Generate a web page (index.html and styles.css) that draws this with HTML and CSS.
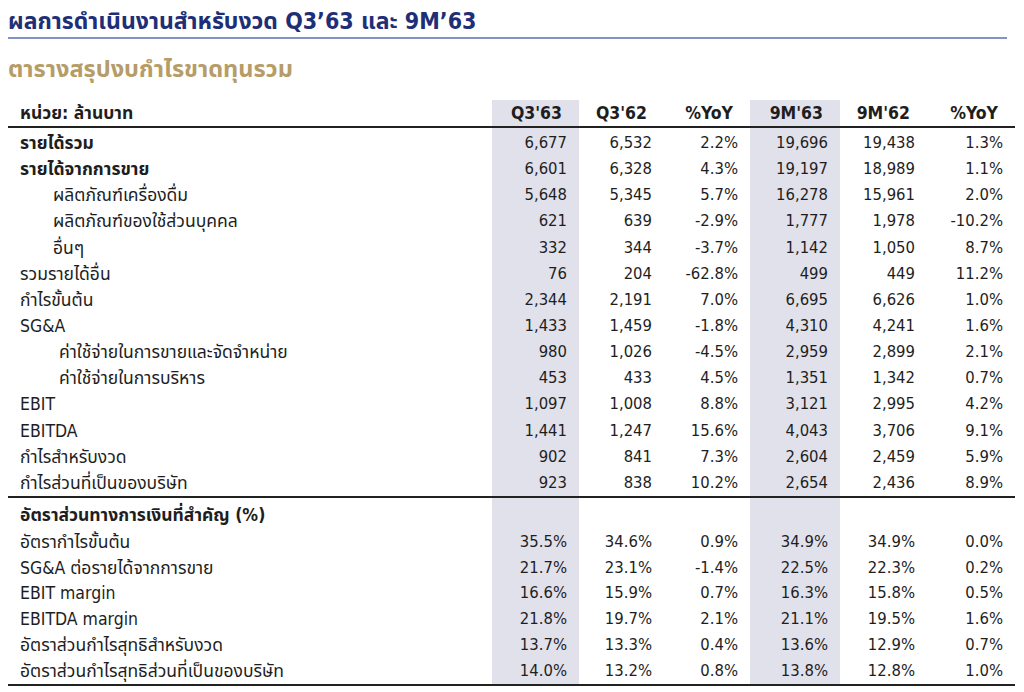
FILE: index.html
```html
<!DOCTYPE html>
<html lang="th">
<head>
<meta charset="utf-8">
<title>ผลการดำเนินงาน</title>
<link rel="stylesheet" href="styles.css">
</head>
<body>
<div class="page">
  <h1 class="title">ผลการดำเนินงานสำหรับงวด Q3’63 และ 9M’63</h1>
  <h2 class="subtitle">ตารางสรุปงบกำไรขาดทุนรวม</h2>
  <table class="fin">
    <colgroup>
      <col class="c-label"><col class="c-q363"><col class="c-q362"><col class="c-yoy1"><col class="c-9m63"><col class="c-9m62"><col class="c-yoy2">
    </colgroup>
    <thead>
      <tr class="head">
        <th class="label">หน่วย: ล้านบาท</th><th class="hl">Q3'63</th><th>Q3'62</th><th>%YoY</th><th class="hl">9M'63</th><th>9M'62</th><th>%YoY</th>
      </tr>
    </thead>
    <tbody class="sec1">
      <tr class="first"><td class="label b">รายได้รวม</td><td class="hl">6,677</td><td>6,532</td><td>2.2%</td><td class="hl">19,696</td><td>19,438</td><td>1.3%</td></tr>
      <tr><td class="label b">รายได้จากการขาย</td><td class="hl">6,601</td><td>6,328</td><td>4.3%</td><td class="hl">19,197</td><td>18,989</td><td>1.1%</td></tr>
      <tr><td class="label i1">ผลิตภัณฑ์เครื่องดื่ม</td><td class="hl">5,648</td><td>5,345</td><td>5.7%</td><td class="hl">16,278</td><td>15,961</td><td>2.0%</td></tr>
      <tr><td class="label i1">ผลิตภัณฑ์ของใช้ส่วนบุคคล</td><td class="hl">621</td><td>639</td><td>-2.9%</td><td class="hl">1,777</td><td>1,978</td><td>-10.2%</td></tr>
      <tr><td class="label i1">อื่นๆ</td><td class="hl">332</td><td>344</td><td>-3.7%</td><td class="hl">1,142</td><td>1,050</td><td>8.7%</td></tr>
      <tr><td class="label">รวมรายได้อื่น</td><td class="hl">76</td><td>204</td><td>-62.8%</td><td class="hl">499</td><td>449</td><td>11.2%</td></tr>
      <tr><td class="label">กำไรขั้นต้น</td><td class="hl">2,344</td><td>2,191</td><td>7.0%</td><td class="hl">6,695</td><td>6,626</td><td>1.0%</td></tr>
      <tr><td class="label">SG&amp;A</td><td class="hl">1,433</td><td>1,459</td><td>-1.8%</td><td class="hl">4,310</td><td>4,241</td><td>1.6%</td></tr>
      <tr><td class="label i2">ค่าใช้จ่ายในการขายและจัดจำหน่าย</td><td class="hl">980</td><td>1,026</td><td>-4.5%</td><td class="hl">2,959</td><td>2,899</td><td>2.1%</td></tr>
      <tr><td class="label i2">ค่าใช้จ่ายในการบริหาร</td><td class="hl">453</td><td>433</td><td>4.5%</td><td class="hl">1,351</td><td>1,342</td><td>0.7%</td></tr>
      <tr><td class="label">EBIT</td><td class="hl">1,097</td><td>1,008</td><td>8.8%</td><td class="hl">3,121</td><td>2,995</td><td>4.2%</td></tr>
      <tr><td class="label">EBITDA</td><td class="hl">1,441</td><td>1,247</td><td>15.6%</td><td class="hl">4,043</td><td>3,706</td><td>9.1%</td></tr>
      <tr><td class="label">กำไรสำหรับงวด</td><td class="hl">902</td><td>841</td><td>7.3%</td><td class="hl">2,604</td><td>2,459</td><td>5.9%</td></tr>
      <tr class="last"><td class="label">กำไรส่วนที่เป็นของบริษัท</td><td class="hl">923</td><td>838</td><td>10.2%</td><td class="hl">2,654</td><td>2,436</td><td>8.9%</td></tr>
    </tbody>
    <tbody class="sec2">
      <tr class="sechead"><td class="label b">อัตราส่วนทางการเงินที่สำคัญ (%)</td><td class="hl"></td><td></td><td></td><td class="hl"></td><td></td><td></td></tr>
      <tr><td class="label">อัตรากำไรขั้นต้น</td><td class="hl">35.5%</td><td>34.6%</td><td>0.9%</td><td class="hl">34.9%</td><td>34.9%</td><td>0.0%</td></tr>
      <tr><td class="label">SG&amp;A ต่อรายได้จากการขาย</td><td class="hl">21.7%</td><td>23.1%</td><td>-1.4%</td><td class="hl">22.5%</td><td>22.3%</td><td>0.2%</td></tr>
      <tr><td class="label">EBIT margin</td><td class="hl">16.6%</td><td>15.9%</td><td>0.7%</td><td class="hl">16.3%</td><td>15.8%</td><td>0.5%</td></tr>
      <tr><td class="label">EBITDA margin</td><td class="hl">21.8%</td><td>19.7%</td><td>2.1%</td><td class="hl">21.1%</td><td>19.5%</td><td>1.6%</td></tr>
      <tr><td class="label">อัตราส่วนกำไรสุทธิสำหรับงวด</td><td class="hl">13.7%</td><td>13.3%</td><td>0.4%</td><td class="hl">13.6%</td><td>12.9%</td><td>0.7%</td></tr>
      <tr class="last"><td class="label">อัตราส่วนกำไรสุทธิส่วนที่เป็นของบริษัท</td><td class="hl">14.0%</td><td>13.2%</td><td>0.8%</td><td class="hl">13.8%</td><td>12.8%</td><td>1.0%</td></tr>
    </tbody>
  </table>
</div>
</body>
</html>
```

FILE: styles.css
```css
html, body {
  margin: 0;
  padding: 0;
  background: #ffffff;
}

body {
  font-family: "DejaVu Sans Condensed", "DejaVu Sans", "Noto Sans Thai", "Noto Sans", sans-serif;
  color: #1e1e1e;
}

.page {
  padding: 7px 0 0 8px;
  width: 1007px;
}

.title {
  margin: 0;
  width: 999px;
  font-size: 23px;
  font-weight: bold;
  color: #1e2f78;
  line-height: 29px;
  height: 30px;
  border-bottom: 2px solid #8591c9;
}

.subtitle {
  margin: 15px 0 0 0;
  font-size: 23.5px;
  font-weight: bold;
  color: #b69c68;
  line-height: 30px;
  height: 30px;
}

.fin {
  margin-top: 16px;
  border-collapse: collapse;
  table-layout: fixed;
  width: 1007px;
  font-size: 16.5px;
  line-height: 20px;
}

.c-label { width: 484px; }
.c-q363 { width: 87px; }
.c-q362 { width: 85px; }
.c-yoy1 { width: 86px; }
.c-9m63 { width: 90px; }
.c-9m62 { width: 87px; }
.c-yoy2 { width: 88px; }

.fin th,
.fin td {
  padding: 0 12px 0 0;
  text-align: right;
  white-space: nowrap;
  vertical-align: middle;
  line-height: 20px;
}

.fin th {
  font-weight: bold;
  font-size: 17.5px;
  height: 26px;
  padding-right: 17px;
  border-bottom: 2px solid #222222;
}

.fin .hl {
  background: #e1e1ec;
}

.fin .label {
  text-align: left;
  padding-left: 12px;
  font-size: 17.5px;
}

.fin .b {
  font-weight: bold;
}

.fin .i1 {
  padding-left: 45px;
}

.fin .i2 {
  padding-left: 51px;
}

.sec1 td {
  height: 26.15px;
}

.sec1 .first td {
  padding-top: 2px;
}

.sec1 .last td,
.sec2 .last td {
  border-bottom: 2px solid #222222;
}

.sec2 td {
  height: 25.8px;
}

.sec2 .sechead td {
  height: 28px;
  padding-top: 3px;
}
```
